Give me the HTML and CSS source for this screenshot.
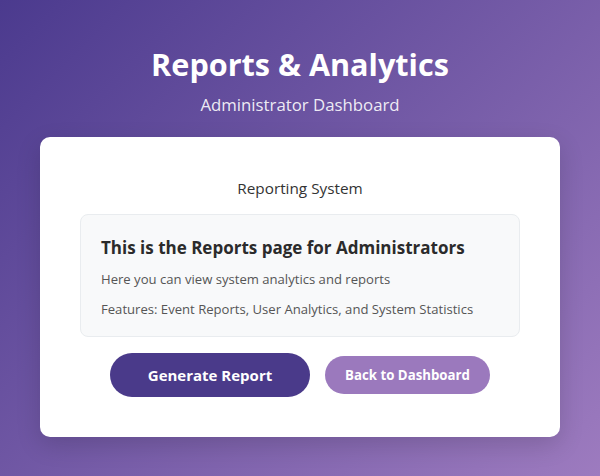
FILE: index.html
```html
<!DOCTYPE html>
<html lang="en">
<head>
<meta charset="utf-8">
<title>Reports &amp; Analytics</title>
<link rel="stylesheet" href="styles.css">
</head>
<body>
<div class="page">
  <header class="header">
    <h1 class="title">Reports &amp; Analytics</h1>
    <p class="subtitle">Administrator Dashboard</p>
  </header>
  <main class="card">
    <p class="system">Reporting System</p>
    <section class="info">
      <h2 class="info-title">This is the Reports page for Administrators</h2>
      <p class="info-text">Here you can view system analytics and reports</p>
      <p class="info-text">Features: Event Reports, User Analytics, and System Statistics</p>
    </section>
    <div class="actions">
      <button class="btn btn-primary">Generate Report</button>
      <button class="btn btn-secondary">Back to Dashboard</button>
    </div>
  </main>
</div>
</body>
</html>
```
FILE: styles.css
```css
html, body {
  margin: 0;
  padding: 0;
}
body {
  min-height: 100vh;
  background: linear-gradient(135deg, #4b3a8e 0%, #9d7bbf 100%);
  font-family: "Open Sans", "Noto Sans", sans-serif;
}
.page {
  width: 520px;
  margin: 0 auto;
  padding-top: 45px;
}
.header {
  text-align: center;
  color: #fff;
  margin-bottom: 20px;
}
.title {
  margin: 0 0 10px;
  font-size: 30.6px;
  line-height: 38px;
  font-weight: 700;
}
.subtitle {
  margin: 0;
  font-size: 16.8px;
  line-height: 24px;
  color: rgba(255,255,255,0.9);
}
.card {
  background: #fff;
  border-radius: 10px;
  padding: 40px;
  box-shadow: 0 8px 24px rgba(0,0,0,0.15);
}
.system {
  margin: 0 0 15px;
  text-align: center;
  font-size: 15.3px;
  line-height: 22px;
  color: #333;
}
.info {
  background: #f8f9fa;
  border: 1px solid #e9ecef;
  border-radius: 8px;
  padding: 20px 20px 17px;
}
.info-title {
  margin: 0 0 9px;
  font-size: 17px;
  line-height: 25px;
  color: #2b2b2b;
  font-weight: 700;
  white-space: nowrap;
}
.info-text {
  margin: 0 0 10px;
  font-size: 13.1px;
  line-height: 20px;
  color: #555;
}
.info-text:last-child {
  margin-bottom: 0;
}
.actions {
  margin-top: 16px;
  display: flex;
  justify-content: center;
  align-items: center;
  gap: 15px;
}
.btn {
  border: none;
  color: #fff;
  font-family: inherit;
  font-weight: 700;
  cursor: pointer;
  padding: 0;
}
.btn-primary {
  width: 200px;
  height: 44px;
  border-radius: 22px;
  background: #4a3a8a;
  font-size: 15px;
}
.btn-secondary {
  width: 165px;
  height: 38px;
  border-radius: 19px;
  background: #9b79bd;
  font-size: 13.25px;
}
```
